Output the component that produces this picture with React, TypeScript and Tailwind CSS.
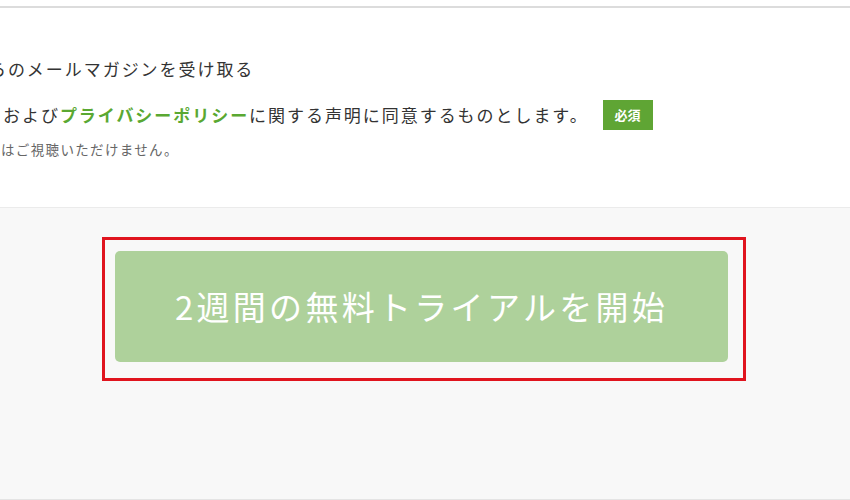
export default function App() {
  return (
    <div className="w-[850px] h-[500px] overflow-hidden bg-[#f8f8f8] font-['Noto_Sans_CJK_JP','Noto_Sans',sans-serif] border-b border-[#e4e4e4]">
      {/* Form footer */}
      <div className="bg-white pt-[6px]">
        <div className="h-[2px] bg-[#dcdcdc]" />
        <div className="pt-[49px] pb-[48px] border-b border-[#ebebeb]">
          <p className="h-[24px] leading-[24px] text-[17px] tracking-[0.115em] text-[#333] whitespace-nowrap ml-[-30px]">
            からのメールマガジンを受け取る
          </p>
          <div className="mt-[19px] flex items-center h-[30px] whitespace-nowrap">
            <p className="ml-[3px] text-[17px] tracking-[0.115em] text-[#333]">
              および<span className="text-[#5aa832] font-bold">プライバシーポリシー</span>に関する声明に同意するものとします。
            </p>
            <span className="ml-[14px] w-[50px] h-[30px] flex items-center justify-center bg-[#5fa534] text-white text-[13px] font-bold">
              必須
            </span>
          </div>
          <p className="mt-[9px] h-[20px] leading-[20px] ml-[1px] text-[13.5px] tracking-[0.1em] text-[#666] whitespace-nowrap">
            はご視聴いただけません。
          </p>
        </div>
      </div>

      {/* CTA */}
      <div className="pt-[29px]">
        <div className="ml-[102px] w-[644px] h-[144px] border-[3px] border-[#e0141e] pl-[10px] pt-[11px]">
          <button className="w-[613px] h-[111px] rounded-[5px] bg-[#aed19b] text-white text-[33px] tracking-[0.1em] flex items-center justify-center">
            2週間の無料トライアルを開始
          </button>
        </div>
      </div>
    </div>
  );
}
